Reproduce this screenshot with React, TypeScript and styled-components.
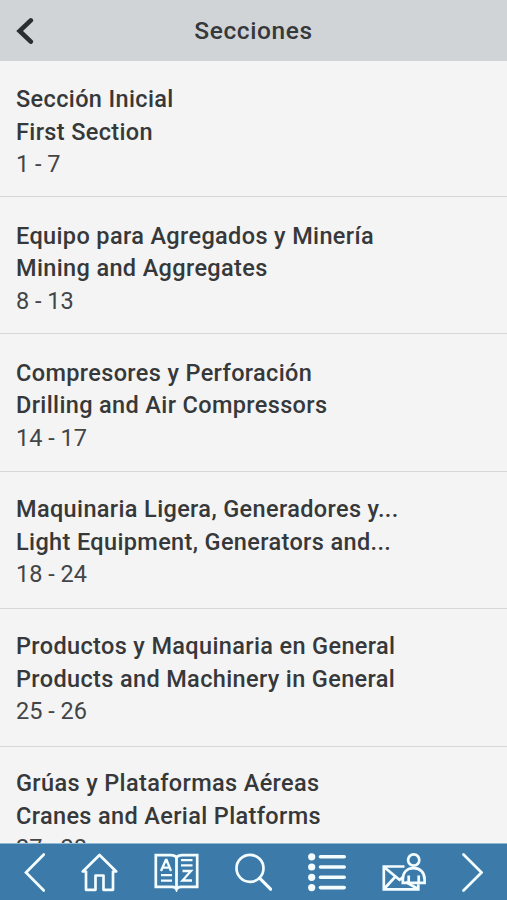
import React from 'react';
import styled, { createGlobalStyle } from 'styled-components';

const GlobalStyle = createGlobalStyle`
  * { box-sizing: border-box; }
  body { margin: 0; background: #f4f4f4; }
  #root { height: 100vh; }
`;

const Screen = styled.div`
  display: flex;
  flex-direction: column;
  height: 100vh;
  overflow: hidden;
  background: #f4f4f4;
  color: #36383a;
  font-family: Roboto, "Liberation Sans", sans-serif;
  font-size: 23.5px;
`;

const Header = styled.header`
  display: grid;
  grid-template-columns: 60px 1fr 60px;
  align-items: center;
  flex: 0 0 61px;
  background: #d1d4d7;
`;

const IconButton = styled.button`
  display: flex;
  padding: 0;
  border: 0;
  background: none;
  color: inherit;
`;

const BackButton = styled(IconButton)`
  padding: 1px 0 0 16px;
  color: #2b2e30;
`;

const Title = styled.h1`
  margin: 0;
  font-size: 24.5px;
  font-weight: 500;
  letter-spacing: 0.6px;
  line-height: 60px;
  text-align: center;
`;

const List = styled.main`
  flex: 1;
  min-height: 0;
  overflow: hidden;
`;

const Row = styled.section<{ $top: number }>`
  height: 137.4px;
  padding: ${({ $top }) => $top}px 16px 0;
  border-bottom: 1px solid #d5d6d7;
  line-height: 32.6px;

  &:first-child { height: 136px; }
`;

const Name = styled.div`
  font-weight: 500;
  letter-spacing: 0.36px;
  white-space: nowrap;
`;

const Pages = styled.div`
  color: #434547;
  letter-spacing: 0;
`;

const Toolbar = styled.nav`
  display: flex;
  flex: 0 0 57px;
  gap: 36px;
  padding: 9px 0 0 24px;
  border-top: 1px solid #8fb8d2;
  background: #3c7ba9;
  color: #f3fcff;
`;

const Glyph = styled.svg`
  display: block;
  flex: none;
  fill: none;
  stroke: currentColor;
  stroke-width: 2.7;
`;

const sections = [
  { spanish: 'Sección Inicial', english: 'First Section', pages: '1 - 7', top: 22 },
  { spanish: 'Equipo para Agregados y Minería', english: 'Mining and Aggregates', pages: '8 - 13', top: 22.6 },
  { spanish: 'Compresores y Perforación', english: 'Drilling and Air Compressors', pages: '14 - 17', top: 22.3 },
  { spanish: 'Maquinaria Ligera, Generadores y...', english: 'Light Equipment, Generators and...', pages: '18 - 24', top: 21.2 },
  { spanish: 'Productos y Maquinaria en General', english: 'Products and Machinery in General', pages: '25 - 26', top: 20.9 },
  { spanish: 'Grúas y Plataformas Aéreas', english: 'Cranes and Aerial Platforms', pages: '27 - 28', top: 20.6 },
];

const tools = [
  { label: 'Anterior', width: 21, art: <path d="M19.8 1.5 2 19.5l17.8 18" strokeLinecap="round" /> },
  {
    label: 'Inicio',
    width: 37,
    art: <path d="M18.5 2 1.8 18.5H5v18.3h9.5V22.5h8v14.3H32V18.5h3.2Z" strokeLinejoin="round" />,
  },
  {
    label: 'Índice',
    width: 45,
    art: (
      <>
        <path d="M22.5 4.5C21 2.5 19.5 2.2 17 2.2H1.8v31.6H18c2.5 0 3.8.5 4.5 2.5.7-2 2-2.5 4.5-2.5h16.2V2.2H28c-2.5 0-4 .3-5.5 2.3Z" />
        <path d="M22.5 4v32" strokeWidth="2.8" />
        <path d="m7 18 4.8-11h.8L17 18M8.5 14.6h7M7 22.2h11M7 27.7h11M27 7.2h11.5M27 12.4h11.5M28.5 18H37l-8.5 9.5H38" strokeWidth="2.3" />
      </>
    ),
  },
  {
    label: 'Buscar',
    width: 37,
    art: (
      <>
        <circle cx="15" cy="15.3" r="13.5" />
        <path d="m24.6 25.2 11 11" strokeWidth="3.2" strokeLinecap="round" />
      </>
    ),
  },
  {
    label: 'Secciones',
    width: 38,
    art: (
      <>
        {[3.8, 14, 24.3, 34.6].map((y) => (
          <React.Fragment key={y}>
            <circle cx="3.7" cy={y} r="3.6" fill="currentColor" stroke="none" />
            <path d={`M12.5 ${y}h23.7`} strokeWidth="3.6" strokeLinecap="round" />
          </React.Fragment>
        ))}
      </>
    ),
  },
  {
    label: 'Contacto',
    width: 44,
    art: (
      <>
        <path d="M22.5 13.5H1.8v22.8h34.5v-5M2 14l15.5 12.8 4-3M2 36l11.5-12.5M24 29l12 7" />
        <circle cx="31.7" cy="7" r="5.6" />
        <path d="M20.8 29.8h21.8v-3.3c0-7-4.2-11.3-10.9-11.3s-10.9 4.3-10.9 11.3ZM26.7 22.5v7M36.7 22.5v7" />
      </>
    ),
  },
  { label: 'Siguiente', width: 21, art: <path d="m1.5 1.5 18 18-18 18" strokeLinecap="round" /> },
];

export default function App() {
  return (
    <>
      <GlobalStyle />
      <Screen>
        <Header>
          <BackButton aria-label="Volver">
            <Glyph width="18" height="28" viewBox="0 0 18 28">
              <path d="M14.8 3.4 3.6 14l11.2 10.6" strokeWidth="4.6" strokeLinecap="round" />
            </Glyph>
          </BackButton>
          <Title>Secciones</Title>
        </Header>
        <List>
          {sections.map(({ spanish, english, pages, top }) => (
            <Row key={spanish} $top={top}>
              <Name>{spanish}</Name>
              <Name>{english}</Name>
              <Pages>{pages}</Pages>
            </Row>
          ))}
        </List>
        <Toolbar>
          {tools.map(({ label, width, art }) => (
            <IconButton key={label} aria-label={label}>
              <Glyph width={width} height="39" viewBox={`0 0 ${width} 39`}>{art}</Glyph>
            </IconButton>
          ))}
        </Toolbar>
      </Screen>
    </>
  );
}
